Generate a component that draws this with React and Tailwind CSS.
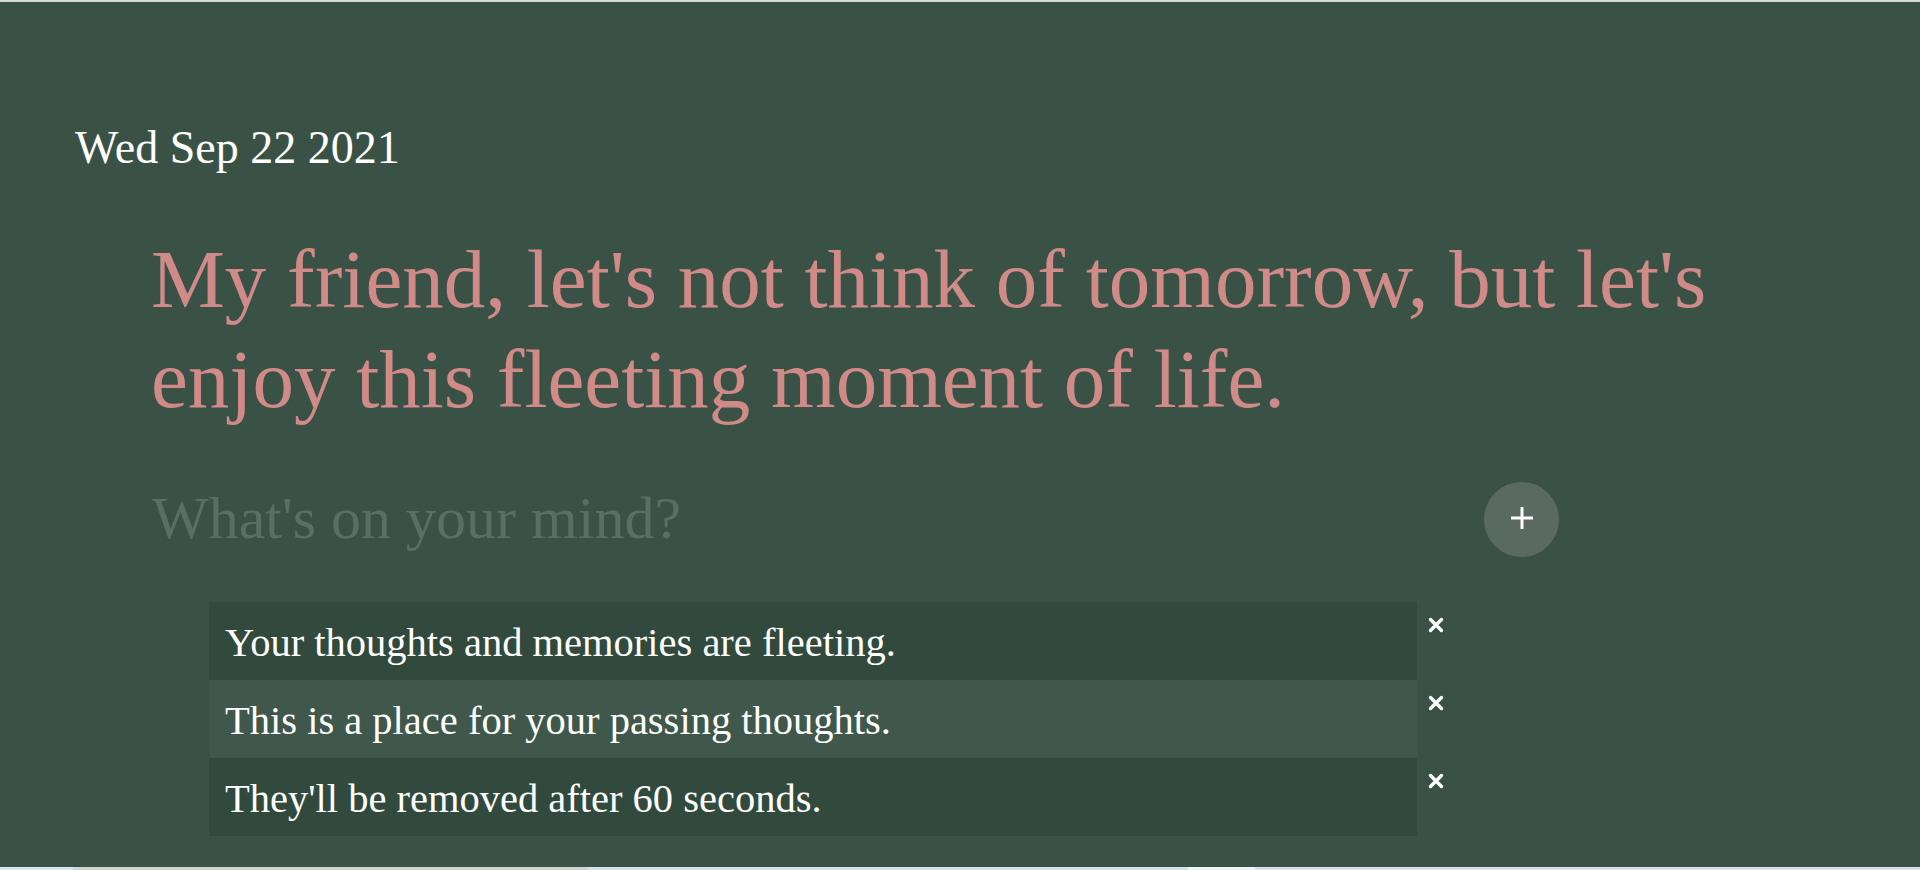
import { useState } from "react";

const seed = [
    "Your thoughts and memories are fleeting.",
    "This is a place for your passing thoughts.",
    "They'll be removed after 60 seconds.",
];

export default function App() {
    const [thoughts, setThoughts] = useState(seed);
    const [text, setText] = useState("");

    /* ===============================
       HANDLERS
    ================================ */
    const addThought = e => {
        e.preventDefault();
        if (!text.trim()) return;
        setThoughts(prev => [...prev, text.trim()]);
        setText("");
    };

    const removeThought = index => {
        setThoughts(prev => prev.filter((_, i) => i !== index));
    };

    /* ===============================
       RENDER
    ================================ */
    return (
        <div className="h-screen flex flex-col bg-[#3a5246] font-['Liberation_Serif',serif] overflow-hidden">
            <div className="h-[2px] bg-[#dadada]" />

            {/* DATE */}
            <div className="pt-[123px] pl-[75px] text-[46px] leading-[45px] text-white">
                Wed Sep 22 2021
            </div>

            {/* QUOTE */}
            <h1 className="ml-[151px] mt-[59px] w-[1640px] text-[83px] leading-[100px] text-[#d08a88]">
                My friend, let's not think of tomorrow, but let's enjoy this fleeting moment of life.
            </h1>

            {/* INPUT */}
            <form
                onSubmit={addThought}
                className="ml-[152px] mt-[53px] w-[1407px] flex items-center"
            >
                <input
                    value={text}
                    onChange={e => setText(e.target.value)}
                    placeholder="What's on your mind?"
                    className="flex-1 h-[75px] -mt-[4px] bg-transparent outline-none text-[60px] text-white placeholder:text-[#577064]"
                />
                <button
                    type="submit"
                    className="w-[75px] h-[75px] rounded-full bg-[#5a6a63] flex items-center justify-center"
                >
                    <svg width="22" height="22" viewBox="0 0 22 22" className="-mt-[3px]">
                        <path d="M11 0v22M0 11h22" stroke="white" strokeWidth="3" />
                    </svg>
                </button>
            </form>

            {/* THOUGHTS */}
            <div className="ml-[209px] mt-[45px] flex flex-col">
                {thoughts.map((t, i) => (
                    <div key={i} className="flex items-start">
                        <div
                            className={`w-[1208px] h-[78px] pl-4 pt-[3px] leading-[75px] text-[40.5px] text-white ${
                                i % 2 === 1 ? "bg-[#3f584b]" : "bg-[#314a3d]"
                            }`}
                        >
                            {t}
                        </div>
                        <button
                            onClick={() => removeThought(i)}
                            className="ml-[11px] mt-[15px]"
                        >
                            <svg width="16" height="16" viewBox="0 0 16 16">
                                <path d="M2.5 2.5l11 11M13.5 2.5l-11 11" stroke="white" strokeWidth="3.4" strokeLinecap="round" />
                            </svg>
                        </button>
                    </div>
                ))}
            </div>

            <div className="flex-1" />

            {/* BOTTOM STRIP */}
            <div className="h-[3px] flex">
                <div className="w-[73px] bg-[#d6e6ea]" />
                <div className="w-[515px] bg-[#cfd3d3]" />
                <div className="w-[600px] bg-[#d3e3e8]" />
                <div className="w-[67px] bg-[#eef4f5]" />
                <div className="flex-1 bg-[#d8dfe8]" />
            </div>
        </div>
    );
}
